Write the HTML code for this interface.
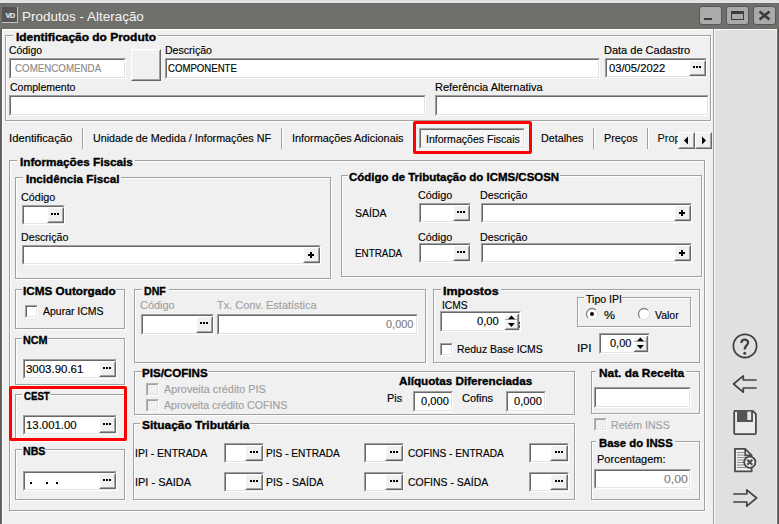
<!DOCTYPE html><html><head><meta charset="utf-8"><style>
html,body{margin:0;padding:0;}
body{width:779px;height:524px;position:relative;overflow:hidden;background:#f0f0f0;font-family:"Liberation Sans", sans-serif;}
.tx{position:absolute;white-space:nowrap;transform-origin:0 0;}
</style></head><body>
<div style="position:absolute;left:0px;top:0px;width:779px;height:3px;background:#e2e2e2"></div>
<div style="position:absolute;left:0px;top:2px;width:779px;height:1px;background:#e8e8e8"></div>
<div style="position:absolute;left:0px;top:3px;width:779px;height:26px;background:#6f706b"></div>
<div style="position:absolute;left:0px;top:3px;width:779px;height:1px;background:#686868"></div>
<div style="position:absolute;left:0px;top:29px;width:2px;height:495px;background:#636363"></div>
<div style="position:absolute;left:777px;top:29px;width:1px;height:495px;background:#6e6e6e"></div>
<div style="position:absolute;left:778px;top:29px;width:1px;height:495px;background:#5a5a5a"></div>
<div style="position:absolute;left:2px;top:29px;width:711px;height:1px;background:#fff"></div>
<div style="position:absolute;left:2px;top:29px;width:1px;height:495px;background:#fff"></div>
<div style="position:absolute;left:713px;top:29px;width:1px;height:495px;background:#a0a0a0"></div>
<div style="position:absolute;left:714px;top:29px;width:1px;height:495px;background:#fff"></div>
<div style="position:absolute;left:715px;top:29px;width:62px;height:495px;background:#e0e0e0"></div>
<div style="position:absolute;left:776px;top:29px;width:1px;height:495px;background:#ebebeb"></div>
<div style="position:absolute;left:715px;top:29px;width:62px;height:1px;background:#fff"></div>
<div style="position:absolute;left:2px;top:7px;width:16px;height:16px;background:#c4c4c4"></div>
<div style="position:absolute;left:2px;top:7px;width:15px;height:15px;background:#555555"></div>
<div style="position:absolute;left:2px;top:9.5px;width:16px;height:11px;color:#e6e6e6;font-size:7.5px;font-weight:bold;line-height:11px;text-align:center;letter-spacing:-0.8px;-webkit-text-stroke:0.2px #e6e6e6">VD</div>
<div class="tx" style="left:21.57px;top:10.00px;font-size:13px;line-height:13px;height:13px;color:#f4f4f4;transform:scaleX(1.0345);">Produtos - Alteração</div>
<div style="position:absolute;left:699px;top:6px;width:23px;height:19px;background:#aaaaaa;border:1px solid #585858;border-radius:3px;box-sizing:border-box"></div>
<div style="position:absolute;left:726px;top:6px;width:23px;height:19px;background:#aaaaaa;border:1px solid #585858;border-radius:3px;box-sizing:border-box"></div>
<div style="position:absolute;left:753px;top:6px;width:23px;height:19px;background:#aaaaaa;border:1px solid #585858;border-radius:3px;box-sizing:border-box"></div>
<div style="position:absolute;left:704px;top:18px;width:8px;height:2px;background:#3c3c3c"></div>
<div style="position:absolute;left:731px;top:11px;width:13px;height:9px;border:1px solid #3c3c3c;border-top-width:3px;box-sizing:border-box"></div>
<svg style="position:absolute;left:758px;top:10px" width="13" height="11"><path d="M1.5 1.5 L11.5 9.5 M11.5 1.5 L1.5 9.5" stroke="#3c3c3c" stroke-width="2.6"/></svg>
<div style="position:absolute;left:6px;top:36px;width:706px;height:86px;border:1px solid #fff;box-sizing:border-box"></div>
<div style="position:absolute;left:5px;top:35px;width:706px;height:86px;border:1px solid #a0a0a0;box-sizing:border-box"></div>
<div style="position:absolute;left:13px;top:34px;width:145px;height:4px;background:#f0f0f0"></div>
<div class="tx" style="left:15.60px;top:31.69px;font-size:11px;line-height:11px;height:11px;color:#000;font-weight:bold;-webkit-text-stroke:0.35px currentColor;transform:scaleX(1.0853);">Identificação do Produto</div>
<div class="tx" style="left:8.60px;top:44.69px;font-size:11px;line-height:11px;height:11px;color:#000;-webkit-text-stroke:0.15px currentColor;transform:scaleX(0.9475);">Código</div>
<div style="position:absolute;left:9px;top:58px;width:117px;height:21px;box-sizing:border-box;border:1px solid;border-color:#a0a0a0 #fff #fff #a0a0a0;"><div style="position:absolute;left:0;top:0;right:0;bottom:0;border:1px solid;border-color:#696969 #e3e3e3 #e3e3e3 #696969;background:#fff"></div></div>
<div class="tx" style="left:14.60px;top:62.69px;font-size:11px;line-height:11px;height:11px;color:#8c8c8c;-webkit-text-stroke:0.15px currentColor;transform:scaleX(0.8867);">COMENCOMENDA</div>
<div style="position:absolute;left:131px;top:49px;width:30px;height:32px;box-sizing:border-box;border:1px solid;border-color:#fff #696969 #696969 #fff;background:#f0f0f0"><div style="position:absolute;left:0;top:0;right:0;bottom:0;border:1px solid;border-color:#f4f4f4 #a0a0a0 #a0a0a0 #f4f4f4;"></div></div>
<div class="tx" style="left:164.66px;top:44.69px;font-size:11px;line-height:11px;height:11px;color:#000;-webkit-text-stroke:0.15px currentColor;transform:scaleX(0.9588);">Descrição</div>
<div style="position:absolute;left:165px;top:58px;width:435px;height:21px;box-sizing:border-box;border:1px solid;border-color:#a0a0a0 #fff #fff #a0a0a0;"><div style="position:absolute;left:0;top:0;right:0;bottom:0;border:1px solid;border-color:#696969 #e3e3e3 #e3e3e3 #696969;background:#fff"></div></div>
<div class="tx" style="left:167.60px;top:62.69px;font-size:11px;line-height:11px;height:11px;color:#000;-webkit-text-stroke:0.15px currentColor;transform:scaleX(0.8740);">COMPONENTE</div>
<div class="tx" style="left:603.60px;top:44.69px;font-size:11px;line-height:11px;height:11px;color:#000;-webkit-text-stroke:0.15px currentColor;transform:scaleX(1.0001);">Data de Cadastro</div>
<div style="position:absolute;left:605px;top:58px;width:102px;height:20px;box-sizing:border-box;border:1px solid;border-color:#a0a0a0 #fff #fff #a0a0a0;"><div style="position:absolute;left:0;top:0;right:0;bottom:0;border:1px solid;border-color:#696969 #e3e3e3 #e3e3e3 #696969;background:#fff"></div></div>
<div style="position:absolute;left:689px;top:60px;width:17px;height:16px;box-sizing:border-box;border:1px solid;border-color:#fff #696969 #696969 #fff;background:#f0f0f0"><div style="position:absolute;left:0;top:0;right:0;bottom:0;border:1px solid;border-color:#f4f4f4 #a0a0a0 #a0a0a0 #f4f4f4;"></div></div>
<div style="position:absolute;left:693px;top:66px;width:2px;height:2px;background:#000"></div>
<div style="position:absolute;left:696px;top:66px;width:2px;height:2px;background:#000"></div>
<div style="position:absolute;left:699px;top:66px;width:2px;height:2px;background:#000"></div>
<div class="tx" style="left:608.60px;top:62.69px;font-size:11px;line-height:11px;height:11px;color:#000;-webkit-text-stroke:0.15px currentColor;transform:scaleX(1.0198);">03/05/2022</div>
<div class="tx" style="left:9.60px;top:81.69px;font-size:11px;line-height:11px;height:11px;color:#000;-webkit-text-stroke:0.15px currentColor;transform:scaleX(0.9561);">Complemento</div>
<div style="position:absolute;left:9px;top:95px;width:417px;height:21px;box-sizing:border-box;border:1px solid;border-color:#a0a0a0 #fff #fff #a0a0a0;"><div style="position:absolute;left:0;top:0;right:0;bottom:0;border:1px solid;border-color:#696969 #e3e3e3 #e3e3e3 #696969;background:#fff"></div></div>
<div class="tx" style="left:434.60px;top:81.69px;font-size:11px;line-height:11px;height:11px;color:#000;-webkit-text-stroke:0.15px currentColor;transform:scaleX(1.0002);">Referência Alternativa</div>
<div style="position:absolute;left:435px;top:95px;width:274px;height:21px;box-sizing:border-box;border:1px solid;border-color:#a0a0a0 #fff #fff #a0a0a0;"><div style="position:absolute;left:0;top:0;right:0;bottom:0;border:1px solid;border-color:#696969 #e3e3e3 #e3e3e3 #696969;background:#fff"></div></div>
<div style="position:absolute;left:82px;top:128px;width:1px;height:21px;background:#a0a0a0"></div>
<div style="position:absolute;left:83px;top:128px;width:1px;height:21px;background:#fff"></div>
<div style="position:absolute;left:281px;top:128px;width:1px;height:21px;background:#a0a0a0"></div>
<div style="position:absolute;left:282px;top:128px;width:1px;height:21px;background:#fff"></div>
<div style="position:absolute;left:593px;top:128px;width:1px;height:21px;background:#a0a0a0"></div>
<div style="position:absolute;left:594px;top:128px;width:1px;height:21px;background:#fff"></div>
<div style="position:absolute;left:647px;top:128px;width:1px;height:21px;background:#a0a0a0"></div>
<div style="position:absolute;left:648px;top:128px;width:1px;height:21px;background:#fff"></div>
<div class="tx" style="left:9.09px;top:132.69px;font-size:11px;line-height:11px;height:11px;color:#000;-webkit-text-stroke:0.15px currentColor;transform:scaleX(1.0251);">Identificação</div>
<div class="tx" style="left:93.43px;top:132.69px;font-size:11px;line-height:11px;height:11px;color:#000;-webkit-text-stroke:0.15px currentColor;transform:scaleX(0.9732);">Unidade de Medida / Informações NF</div>
<div class="tx" style="left:291.82px;top:132.69px;font-size:11px;line-height:11px;height:11px;color:#000;-webkit-text-stroke:0.15px currentColor;transform:scaleX(0.9858);">Informações Adicionais</div>
<div style="position:absolute;left:419px;top:128px;width:106px;height:21px;box-sizing:border-box;border:1px solid;border-color:#a0a0a0 #fff #fff #a0a0a0;"><div style="position:absolute;left:0;top:0;right:0;bottom:0;border:1px solid;border-color:#696969 #e3e3e3 #e3e3e3 #696969;background:#f6f6f6"></div></div>
<div class="tx" style="left:425.64px;top:133.69px;font-size:11px;line-height:11px;height:11px;color:#000;-webkit-text-stroke:0.15px currentColor;transform:scaleX(0.9593);">Informações Fiscais</div>
<div class="tx" style="left:540.62px;top:132.69px;font-size:11px;line-height:11px;height:11px;color:#000;-webkit-text-stroke:0.15px currentColor;transform:scaleX(0.9762);">Detalhes</div>
<div class="tx" style="left:603.53px;top:132.69px;font-size:11px;line-height:11px;height:11px;color:#000;-webkit-text-stroke:0.15px currentColor;transform:scaleX(0.9802);">Preços</div>
<div style="position:absolute;left:657px;top:128px;width:21px;height:21px;overflow:hidden"><div style="position:absolute;left:0.5px;top:4.69px;font-size:11px;line-height:11px;white-space:nowrap">Propriedades</div></div>
<div style="position:absolute;left:678px;top:132px;width:17px;height:17px;box-sizing:border-box;border:1px solid;border-color:#fff #696969 #696969 #fff;background:#f0f0f0"><div style="position:absolute;left:0;top:0;right:0;bottom:0;border:1px solid;border-color:#f4f4f4 #a0a0a0 #a0a0a0 #f4f4f4;"></div></div>
<div style="position:absolute;left:695px;top:132px;width:17px;height:17px;box-sizing:border-box;border:1px solid;border-color:#fff #696969 #696969 #fff;background:#f0f0f0"><div style="position:absolute;left:0;top:0;right:0;bottom:0;border:1px solid;border-color:#f4f4f4 #a0a0a0 #a0a0a0 #f4f4f4;"></div></div>
<svg style="position:absolute;left:678px;top:132px" width="34" height="17"><polygon points="6,8.5 10,4.5 10,12.5" fill="#000"/><polygon points="28,8.5 24,4.5 24,12.5" fill="#000"/></svg>
<div style="position:absolute;left:413px;top:121px;width:119px;height:33px;border:3px solid #ff0000;border-radius:2px;box-sizing:border-box"></div>
<div style="position:absolute;left:10px;top:161px;width:696px;height:351px;border:1px solid #fff;box-sizing:border-box"></div>
<div style="position:absolute;left:9px;top:160px;width:696px;height:351px;border:1px solid #a0a0a0;box-sizing:border-box"></div>
<div style="position:absolute;left:17px;top:159px;width:117.69999999999999px;height:4px;background:#f0f0f0"></div>
<div class="tx" style="left:19.60px;top:156.69px;font-size:11px;line-height:11px;height:11px;color:#000;font-weight:bold;-webkit-text-stroke:0.35px currentColor;transform:scaleX(1.0673);">Informações Fiscais</div>
<div style="position:absolute;left:16px;top:178px;width:316px;height:102px;border:1px solid #fff;box-sizing:border-box"></div>
<div style="position:absolute;left:15px;top:177px;width:316px;height:102px;border:1px solid #a0a0a0;box-sizing:border-box"></div>
<div style="position:absolute;left:23.1px;top:176px;width:98.1px;height:4px;background:#f0f0f0"></div>
<div class="tx" style="left:25.90px;top:173.69px;font-size:11px;line-height:11px;height:11px;color:#000;font-weight:bold;-webkit-text-stroke:0.35px currentColor;transform:scaleX(1.0607);">Incidência Fiscal</div>
<div class="tx" style="left:21.10px;top:191.69px;font-size:11px;line-height:11px;height:11px;color:#000;-webkit-text-stroke:0.15px currentColor;transform:scaleX(0.9853);">Código</div>
<div style="position:absolute;left:22px;top:205px;width:43px;height:20px;box-sizing:border-box;border:1px solid;border-color:#a0a0a0 #fff #fff #a0a0a0;"><div style="position:absolute;left:0;top:0;right:0;bottom:0;border:1px solid;border-color:#696969 #e3e3e3 #e3e3e3 #696969;background:#fff"></div></div>
<div style="position:absolute;left:47px;top:207px;width:17px;height:16px;box-sizing:border-box;border:1px solid;border-color:#fff #696969 #696969 #fff;background:#f0f0f0"><div style="position:absolute;left:0;top:0;right:0;bottom:0;border:1px solid;border-color:#f4f4f4 #a0a0a0 #a0a0a0 #f4f4f4;"></div></div>
<div style="position:absolute;left:51px;top:213px;width:2px;height:2px;background:#000"></div>
<div style="position:absolute;left:54px;top:213px;width:2px;height:2px;background:#000"></div>
<div style="position:absolute;left:57px;top:213px;width:2px;height:2px;background:#000"></div>
<div class="tx" style="left:21.15px;top:231.69px;font-size:11px;line-height:11px;height:11px;color:#000;-webkit-text-stroke:0.15px currentColor;transform:scaleX(0.9697);">Descrição</div>
<div style="position:absolute;left:22px;top:245px;width:299px;height:20px;box-sizing:border-box;border:1px solid;border-color:#a0a0a0 #fff #fff #a0a0a0;"><div style="position:absolute;left:0;top:0;right:0;bottom:0;border:1px solid;border-color:#696969 #e3e3e3 #e3e3e3 #696969;background:#fff"></div></div>
<div style="position:absolute;left:303px;top:247px;width:17px;height:16px;box-sizing:border-box;border:1px solid;border-color:#fff #696969 #696969 #fff;background:#f0f0f0"><div style="position:absolute;left:0;top:0;right:0;bottom:0;border:1px solid;border-color:#f4f4f4 #a0a0a0 #a0a0a0 #f4f4f4;"></div></div>
<div style="position:absolute;left:308px;top:254px;width:6px;height:2px;background:#000"></div>
<div style="position:absolute;left:310px;top:252px;width:2px;height:6px;background:#000"></div>
<div style="position:absolute;left:342px;top:176px;width:361px;height:102px;border:1px solid #fff;box-sizing:border-box"></div>
<div style="position:absolute;left:341px;top:175px;width:361px;height:102px;border:1px solid #a0a0a0;box-sizing:border-box"></div>
<div style="position:absolute;left:348.2px;top:174px;width:211.8px;height:4px;background:#f0f0f0"></div>
<div class="tx" style="left:349.20px;top:171.69px;font-size:11px;line-height:11px;height:11px;color:#000;font-weight:bold;-webkit-text-stroke:0.35px currentColor;transform:scaleX(1.0418);">Código de Tributação do ICMS/CSOSN</div>
<div class="tx" style="left:354.75px;top:207.69px;font-size:11px;line-height:11px;height:11px;color:#000;-webkit-text-stroke:0.15px currentColor;transform:scaleX(0.9547);">SAÍDA</div>
<div class="tx" style="left:418.10px;top:189.69px;font-size:11px;line-height:11px;height:11px;color:#000;-webkit-text-stroke:0.15px currentColor;transform:scaleX(0.9807);">Código</div>
<div style="position:absolute;left:419px;top:203px;width:52px;height:20px;box-sizing:border-box;border:1px solid;border-color:#a0a0a0 #fff #fff #a0a0a0;"><div style="position:absolute;left:0;top:0;right:0;bottom:0;border:1px solid;border-color:#696969 #e3e3e3 #e3e3e3 #696969;background:#fff"></div></div>
<div style="position:absolute;left:453px;top:205px;width:17px;height:16px;box-sizing:border-box;border:1px solid;border-color:#fff #696969 #696969 #fff;background:#f0f0f0"><div style="position:absolute;left:0;top:0;right:0;bottom:0;border:1px solid;border-color:#f4f4f4 #a0a0a0 #a0a0a0 #f4f4f4;"></div></div>
<div style="position:absolute;left:457px;top:211px;width:2px;height:2px;background:#000"></div>
<div style="position:absolute;left:460px;top:211px;width:2px;height:2px;background:#000"></div>
<div style="position:absolute;left:463px;top:211px;width:2px;height:2px;background:#000"></div>
<div class="tx" style="left:479.65px;top:189.69px;font-size:11px;line-height:11px;height:11px;color:#000;-webkit-text-stroke:0.15px currentColor;transform:scaleX(0.9697);">Descrição</div>
<div style="position:absolute;left:481px;top:203px;width:211px;height:20px;box-sizing:border-box;border:1px solid;border-color:#a0a0a0 #fff #fff #a0a0a0;"><div style="position:absolute;left:0;top:0;right:0;bottom:0;border:1px solid;border-color:#696969 #e3e3e3 #e3e3e3 #696969;background:#fff"></div></div>
<div style="position:absolute;left:674px;top:205px;width:17px;height:16px;box-sizing:border-box;border:1px solid;border-color:#fff #696969 #696969 #fff;background:#f0f0f0"><div style="position:absolute;left:0;top:0;right:0;bottom:0;border:1px solid;border-color:#f4f4f4 #a0a0a0 #a0a0a0 #f4f4f4;"></div></div>
<div style="position:absolute;left:679px;top:212px;width:6px;height:2px;background:#000"></div>
<div style="position:absolute;left:681px;top:210px;width:2px;height:6px;background:#000"></div>
<div class="tx" style="left:354.81px;top:247.69px;font-size:11px;line-height:11px;height:11px;color:#000;-webkit-text-stroke:0.15px currentColor;transform:scaleX(0.8965);">ENTRADA</div>
<div class="tx" style="left:418.10px;top:231.69px;font-size:11px;line-height:11px;height:11px;color:#000;-webkit-text-stroke:0.15px currentColor;transform:scaleX(0.9807);">Código</div>
<div style="position:absolute;left:419px;top:243px;width:52px;height:20px;box-sizing:border-box;border:1px solid;border-color:#a0a0a0 #fff #fff #a0a0a0;"><div style="position:absolute;left:0;top:0;right:0;bottom:0;border:1px solid;border-color:#696969 #e3e3e3 #e3e3e3 #696969;background:#fff"></div></div>
<div style="position:absolute;left:453px;top:245px;width:17px;height:16px;box-sizing:border-box;border:1px solid;border-color:#fff #696969 #696969 #fff;background:#f0f0f0"><div style="position:absolute;left:0;top:0;right:0;bottom:0;border:1px solid;border-color:#f4f4f4 #a0a0a0 #a0a0a0 #f4f4f4;"></div></div>
<div style="position:absolute;left:457px;top:251px;width:2px;height:2px;background:#000"></div>
<div style="position:absolute;left:460px;top:251px;width:2px;height:2px;background:#000"></div>
<div style="position:absolute;left:463px;top:251px;width:2px;height:2px;background:#000"></div>
<div class="tx" style="left:479.65px;top:231.69px;font-size:11px;line-height:11px;height:11px;color:#000;-webkit-text-stroke:0.15px currentColor;transform:scaleX(0.9697);">Descrição</div>
<div style="position:absolute;left:481px;top:243px;width:211px;height:20px;box-sizing:border-box;border:1px solid;border-color:#a0a0a0 #fff #fff #a0a0a0;"><div style="position:absolute;left:0;top:0;right:0;bottom:0;border:1px solid;border-color:#696969 #e3e3e3 #e3e3e3 #696969;background:#fff"></div></div>
<div style="position:absolute;left:674px;top:245px;width:17px;height:16px;box-sizing:border-box;border:1px solid;border-color:#fff #696969 #696969 #fff;background:#f0f0f0"><div style="position:absolute;left:0;top:0;right:0;bottom:0;border:1px solid;border-color:#f4f4f4 #a0a0a0 #a0a0a0 #f4f4f4;"></div></div>
<div style="position:absolute;left:679px;top:252px;width:6px;height:2px;background:#000"></div>
<div style="position:absolute;left:681px;top:250px;width:2px;height:6px;background:#000"></div>
<div style="position:absolute;left:16px;top:290px;width:110px;height:40px;border:1px solid #fff;box-sizing:border-box"></div>
<div style="position:absolute;left:15px;top:289px;width:110px;height:40px;border:1px solid #a0a0a0;box-sizing:border-box"></div>
<div style="position:absolute;left:22px;top:288px;width:93.6px;height:4px;background:#f0f0f0"></div>
<div class="tx" style="left:22.60px;top:285.69px;font-size:11px;line-height:11px;height:11px;color:#000;font-weight:bold;-webkit-text-stroke:0.35px currentColor;transform:scaleX(1.0671);">ICMS Outorgado</div>
<div style="position:absolute;left:25px;top:305px;width:13px;height:13px;box-sizing:border-box;border:1px solid;border-color:#a0a0a0 #fff #fff #a0a0a0;"><div style="position:absolute;left:0;top:0;right:0;bottom:0;border:1px solid;border-color:#696969 #e3e3e3 #e3e3e3 #696969;background:#fff"></div></div>
<div class="tx" style="left:43.20px;top:305.69px;font-size:11px;line-height:11px;height:11px;color:#000;-webkit-text-stroke:0.15px currentColor;transform:scaleX(0.9524);">Apurar ICMS</div>
<div style="position:absolute;left:16px;top:339px;width:110px;height:47px;border:1px solid #fff;box-sizing:border-box"></div>
<div style="position:absolute;left:15px;top:338px;width:110px;height:47px;border:1px solid #a0a0a0;box-sizing:border-box"></div>
<div style="position:absolute;left:22px;top:337px;width:25.1px;height:4px;background:#f0f0f0"></div>
<div class="tx" style="left:22.60px;top:334.69px;font-size:11px;line-height:11px;height:11px;color:#000;font-weight:bold;-webkit-text-stroke:0.35px currentColor;transform:scaleX(0.9771);">NCM</div>
<div style="position:absolute;left:23px;top:359px;width:94px;height:20px;box-sizing:border-box;border:1px solid;border-color:#a0a0a0 #fff #fff #a0a0a0;"><div style="position:absolute;left:0;top:0;right:0;bottom:0;border:1px solid;border-color:#696969 #e3e3e3 #e3e3e3 #696969;background:#fff"></div></div>
<div style="position:absolute;left:99px;top:361px;width:17px;height:16px;box-sizing:border-box;border:1px solid;border-color:#fff #696969 #696969 #fff;background:#f0f0f0"><div style="position:absolute;left:0;top:0;right:0;bottom:0;border:1px solid;border-color:#f4f4f4 #a0a0a0 #a0a0a0 #f4f4f4;"></div></div>
<div style="position:absolute;left:103px;top:367px;width:2px;height:2px;background:#000"></div>
<div style="position:absolute;left:106px;top:367px;width:2px;height:2px;background:#000"></div>
<div style="position:absolute;left:109px;top:367px;width:2px;height:2px;background:#000"></div>
<div class="tx" style="left:25.60px;top:363.69px;font-size:11px;line-height:11px;height:11px;color:#000;-webkit-text-stroke:0.15px currentColor;transform:scaleX(1.0410);">3003.90.61</div>
<div style="position:absolute;left:16px;top:395px;width:110px;height:47px;border:1px solid #fff;box-sizing:border-box"></div>
<div style="position:absolute;left:15px;top:394px;width:110px;height:47px;border:1px solid #a0a0a0;box-sizing:border-box"></div>
<div style="position:absolute;left:22.3px;top:393px;width:28.099999999999998px;height:4px;background:#f0f0f0"></div>
<div class="tx" style="left:23.50px;top:390.69px;font-size:11px;line-height:11px;height:11px;color:#000;font-weight:bold;-webkit-text-stroke:0.35px currentColor;transform:scaleX(0.8786);">CEST</div>
<div style="position:absolute;left:23px;top:415px;width:94px;height:20px;box-sizing:border-box;border:1px solid;border-color:#a0a0a0 #fff #fff #a0a0a0;"><div style="position:absolute;left:0;top:0;right:0;bottom:0;border:1px solid;border-color:#696969 #e3e3e3 #e3e3e3 #696969;background:#fff"></div></div>
<div style="position:absolute;left:99px;top:417px;width:17px;height:16px;box-sizing:border-box;border:1px solid;border-color:#fff #696969 #696969 #fff;background:#f0f0f0"><div style="position:absolute;left:0;top:0;right:0;bottom:0;border:1px solid;border-color:#f4f4f4 #a0a0a0 #a0a0a0 #f4f4f4;"></div></div>
<div style="position:absolute;left:103px;top:423px;width:2px;height:2px;background:#000"></div>
<div style="position:absolute;left:106px;top:423px;width:2px;height:2px;background:#000"></div>
<div style="position:absolute;left:109px;top:423px;width:2px;height:2px;background:#000"></div>
<div class="tx" style="left:25.78px;top:419.69px;font-size:11px;line-height:11px;height:11px;color:#000;-webkit-text-stroke:0.15px currentColor;transform:scaleX(1.0359);">13.001.00</div>
<div style="position:absolute;left:16px;top:450px;width:110px;height:51px;border:1px solid #fff;box-sizing:border-box"></div>
<div style="position:absolute;left:15px;top:449px;width:110px;height:51px;border:1px solid #a0a0a0;box-sizing:border-box"></div>
<div style="position:absolute;left:22.3px;top:448px;width:22.7px;height:4px;background:#f0f0f0"></div>
<div class="tx" style="left:22.50px;top:445.69px;font-size:11px;line-height:11px;height:11px;color:#000;font-weight:bold;-webkit-text-stroke:0.35px currentColor;transform:scaleX(0.9665);">NBS</div>
<div style="position:absolute;left:23px;top:471px;width:94px;height:20px;box-sizing:border-box;border:1px solid;border-color:#a0a0a0 #fff #fff #a0a0a0;"><div style="position:absolute;left:0;top:0;right:0;bottom:0;border:1px solid;border-color:#696969 #e3e3e3 #e3e3e3 #696969;background:#fff"></div></div>
<div style="position:absolute;left:99px;top:473px;width:17px;height:16px;box-sizing:border-box;border:1px solid;border-color:#fff #696969 #696969 #fff;background:#f0f0f0"><div style="position:absolute;left:0;top:0;right:0;bottom:0;border:1px solid;border-color:#f4f4f4 #a0a0a0 #a0a0a0 #f4f4f4;"></div></div>
<div style="position:absolute;left:103px;top:479px;width:2px;height:2px;background:#000"></div>
<div style="position:absolute;left:106px;top:479px;width:2px;height:2px;background:#000"></div>
<div style="position:absolute;left:109px;top:479px;width:2px;height:2px;background:#000"></div>
<div style="position:absolute;left:30px;top:482px;width:2px;height:2px;background:#000"></div>
<div style="position:absolute;left:46px;top:482px;width:2px;height:2px;background:#000"></div>
<div style="position:absolute;left:56px;top:482px;width:2px;height:2px;background:#000"></div>
<div style="position:absolute;left:9px;top:386px;width:118px;height:55px;border:3px solid #ff0000;border-radius:2px;box-sizing:border-box"></div>
<div style="position:absolute;left:135px;top:290px;width:292px;height:74px;border:1px solid #fff;box-sizing:border-box"></div>
<div style="position:absolute;left:134px;top:289px;width:292px;height:74px;border:1px solid #a0a0a0;box-sizing:border-box"></div>
<div style="position:absolute;left:142.2px;top:288px;width:27.0px;height:4px;background:#f0f0f0"></div>
<div class="tx" style="left:144.20px;top:285.69px;font-size:11px;line-height:11px;height:11px;color:#000;font-weight:bold;-webkit-text-stroke:0.35px currentColor;transform:scaleX(0.9609);">DNF</div>
<div class="tx" style="left:139.80px;top:299.69px;font-size:11px;line-height:11px;height:11px;color:#a0a0a0;-webkit-text-stroke:0.15px currentColor;transform:scaleX(0.9940);">Código</div>
<div class="tx" style="left:216.70px;top:299.69px;font-size:11px;line-height:11px;height:11px;color:#a0a0a0;-webkit-text-stroke:0.15px currentColor;transform:scaleX(0.9952);">Tx. Conv. Estatística</div>
<div style="position:absolute;left:141px;top:314px;width:73px;height:21px;box-sizing:border-box;border:1px solid;border-color:#a0a0a0 #fff #fff #a0a0a0;"><div style="position:absolute;left:0;top:0;right:0;bottom:0;border:1px solid;border-color:#696969 #e3e3e3 #e3e3e3 #696969;background:#fff"></div></div>
<div style="position:absolute;left:196px;top:316px;width:17px;height:17px;box-sizing:border-box;border:1px solid;border-color:#fff #696969 #696969 #fff;background:#f0f0f0"><div style="position:absolute;left:0;top:0;right:0;bottom:0;border:1px solid;border-color:#f4f4f4 #a0a0a0 #a0a0a0 #f4f4f4;"></div></div>
<div style="position:absolute;left:200px;top:322px;width:2px;height:2px;background:#000"></div>
<div style="position:absolute;left:203px;top:322px;width:2px;height:2px;background:#000"></div>
<div style="position:absolute;left:206px;top:322px;width:2px;height:2px;background:#000"></div>
<div style="position:absolute;left:217px;top:314px;width:201px;height:21px;box-sizing:border-box;border:1px solid;border-color:#a0a0a0 #fff #fff #a0a0a0;"><div style="position:absolute;left:0;top:0;right:0;bottom:0;border:1px solid;border-color:#696969 #e3e3e3 #e3e3e3 #696969;background:#fff"></div></div>
<div class="tx" style="left:385.80px;top:318.69px;font-size:11px;line-height:11px;height:11px;color:#808080;-webkit-text-stroke:0.15px currentColor;transform:scaleX(0.9961);">0,000</div>
<div style="position:absolute;left:434px;top:290px;width:267px;height:74px;border:1px solid #fff;box-sizing:border-box"></div>
<div style="position:absolute;left:433px;top:289px;width:267px;height:74px;border:1px solid #a0a0a0;box-sizing:border-box"></div>
<div style="position:absolute;left:441.2px;top:288px;width:59.900000000000034px;height:4px;background:#f0f0f0"></div>
<div class="tx" style="left:443.20px;top:285.69px;font-size:11px;line-height:11px;height:11px;color:#000;font-weight:bold;-webkit-text-stroke:0.35px currentColor;transform:scaleX(1.1379);">Impostos</div>
<div class="tx" style="left:441.76px;top:299.69px;font-size:11px;line-height:11px;height:11px;color:#000;-webkit-text-stroke:0.15px currentColor;transform:scaleX(0.9331);">ICMS</div>
<div style="position:absolute;left:440px;top:311px;width:81px;height:21px;box-sizing:border-box;border:1px solid;border-color:#a0a0a0 #fff #fff #a0a0a0;"><div style="position:absolute;left:0;top:0;right:0;bottom:0;border:1px solid;border-color:#696969 #e3e3e3 #e3e3e3 #696969;background:#fff"></div></div>
<div class="tx" style="left:477.40px;top:315.69px;font-size:11px;line-height:11px;height:11px;color:#000;-webkit-text-stroke:0.15px currentColor;transform:scaleX(1.0211);">0,00</div>
<div style="position:absolute;left:505px;top:314px;width:14px;height:16px;background:#f0f0f0"></div>
<div style="position:absolute;left:505px;top:314px;width:13px;height:1px;background:#fafafa"></div>
<div style="position:absolute;left:505px;top:314px;width:1px;height:15px;background:#fafafa"></div>
<div style="position:absolute;left:518px;top:314px;width:1px;height:16px;background:#696969"></div>
<div style="position:absolute;left:517px;top:315px;width:1px;height:14px;background:#a0a0a0"></div>
<div style="position:absolute;left:505px;top:329px;width:14px;height:1px;background:#696969"></div>
<div style="position:absolute;left:506px;top:328px;width:12px;height:1px;background:#a0a0a0"></div>
<div style="position:absolute;left:505px;top:319px;width:12px;height:1px;background:#a8a8a8"></div>
<div style="position:absolute;left:505px;top:320px;width:12px;height:1px;background:#fff"></div>
<svg style="position:absolute;left:505px;top:314px" width="14" height="16"><polygon points="2.9000000000000004,5.3 9.9,5.3 6.4,1.6" fill="#000"/><polygon points="2.9000000000000004,9 9.9,9 6.4,12.9" fill="#000"/></svg>
<div style="position:absolute;left:519px;top:322px;width:1px;height:2px;background:#2a2a2a"></div>
<div style="position:absolute;left:519px;top:325px;width:1px;height:3px;background:#3b5fa8"></div>
<div style="position:absolute;left:440px;top:343px;width:13px;height:13px;box-sizing:border-box;border:1px solid;border-color:#a0a0a0 #fff #fff #a0a0a0;"><div style="position:absolute;left:0;top:0;right:0;bottom:0;border:1px solid;border-color:#696969 #e3e3e3 #e3e3e3 #696969;background:#fff"></div></div>
<div class="tx" style="left:456.56px;top:343.69px;font-size:11px;line-height:11px;height:11px;color:#000;-webkit-text-stroke:0.15px currentColor;transform:scaleX(0.9473);">Reduz Base ICMS</div>
<div style="position:absolute;left:578px;top:298px;width:114px;height:30px;border:1px solid #fff;box-sizing:border-box"></div>
<div style="position:absolute;left:577px;top:297px;width:114px;height:30px;border:1px solid #a0a0a0;box-sizing:border-box"></div>
<div style="position:absolute;left:584.4px;top:296px;width:37.5px;height:4px;background:#f0f0f0"></div>
<div class="tx" style="left:585.80px;top:293.69px;font-size:11px;line-height:11px;height:11px;color:#000;-webkit-text-stroke:0.15px currentColor;transform:scaleX(0.9606);">Tipo IPI</div>
<svg style="position:absolute;left:585px;top:307px" width="14" height="14"><circle cx="7" cy="7" r="5.5" fill="#fff"/><path d="M3.1 10.9 A5.5 5.5 0 0 1 10.9 3.1" stroke="#808080" stroke-width="1.3" fill="none"/><path d="M10.9 3.1 A5.5 5.5 0 0 1 3.1 10.9" stroke="#e3e3e3" stroke-width="1.2" fill="none"/><circle cx="7" cy="7" r="2" fill="#000"/></svg>
<div class="tx" style="left:603.80px;top:309.69px;font-size:11px;line-height:11px;height:11px;color:#000;-webkit-text-stroke:0.15px currentColor;transform:scaleX(1.1238);">%</div>
<svg style="position:absolute;left:636.5px;top:307px" width="14" height="14"><circle cx="7" cy="7" r="5.5" fill="#fff"/><path d="M3.1 10.9 A5.5 5.5 0 0 1 10.9 3.1" stroke="#808080" stroke-width="1.3" fill="none"/><path d="M10.9 3.1 A5.5 5.5 0 0 1 3.1 10.9" stroke="#e3e3e3" stroke-width="1.2" fill="none"/></svg>
<div class="tx" style="left:655.00px;top:309.69px;font-size:11px;line-height:11px;height:11px;color:#000;-webkit-text-stroke:0.15px currentColor;transform:scaleX(0.9502);">Valor</div>
<div class="tx" style="left:576.52px;top:342.69px;font-size:11px;line-height:11px;height:11px;color:#000;-webkit-text-stroke:0.15px currentColor;transform:scaleX(1.0833);">IPI</div>
<div style="position:absolute;left:599px;top:333px;width:51px;height:21px;box-sizing:border-box;border:1px solid;border-color:#a0a0a0 #fff #fff #a0a0a0;"><div style="position:absolute;left:0;top:0;right:0;bottom:0;border:1px solid;border-color:#696969 #e3e3e3 #e3e3e3 #696969;background:#fff"></div></div>
<div class="tx" style="left:609.70px;top:337.69px;font-size:11px;line-height:11px;height:11px;color:#000;-webkit-text-stroke:0.15px currentColor;transform:scaleX(1.0006);">0,00</div>
<div style="position:absolute;left:634px;top:336px;width:14px;height:16px;background:#f0f0f0"></div>
<div style="position:absolute;left:634px;top:336px;width:13px;height:1px;background:#fafafa"></div>
<div style="position:absolute;left:634px;top:336px;width:1px;height:15px;background:#fafafa"></div>
<div style="position:absolute;left:647px;top:336px;width:1px;height:16px;background:#696969"></div>
<div style="position:absolute;left:646px;top:337px;width:1px;height:14px;background:#a0a0a0"></div>
<div style="position:absolute;left:634px;top:351px;width:14px;height:1px;background:#696969"></div>
<div style="position:absolute;left:635px;top:350px;width:12px;height:1px;background:#a0a0a0"></div>
<div style="position:absolute;left:634px;top:341px;width:12px;height:1px;background:#a8a8a8"></div>
<div style="position:absolute;left:634px;top:342px;width:12px;height:1px;background:#fff"></div>
<svg style="position:absolute;left:634px;top:336px" width="14" height="16"><polygon points="2.9000000000000004,5.3 9.9,5.3 6.4,1.6" fill="#000"/><polygon points="2.9000000000000004,9 9.9,9 6.4,12.9" fill="#000"/></svg>
<div style="position:absolute;left:135px;top:372px;width:441px;height:44px;border:1px solid #fff;box-sizing:border-box"></div>
<div style="position:absolute;left:134px;top:371px;width:441px;height:44px;border:1px solid #a0a0a0;box-sizing:border-box"></div>
<div style="position:absolute;left:141.6px;top:370px;width:66.4px;height:4px;background:#f0f0f0"></div>
<div class="tx" style="left:142.40px;top:367.69px;font-size:11px;line-height:11px;height:11px;color:#000;font-weight:bold;-webkit-text-stroke:0.35px currentColor;transform:scaleX(1.0523);">PIS/COFINS</div>
<div style="position:absolute;left:146px;top:383px;width:13px;height:13px;box-sizing:border-box;border:1px solid;border-color:#b4b4b4 #fff #fff #b4b4b4;"><div style="position:absolute;left:0;top:0;right:0;bottom:0;border:1px solid;border-color:#a0a0a0 #e3e3e3 #e3e3e3 #a0a0a0;background:#f0f0f0"></div></div>
<div class="tx" style="left:164.00px;top:383.69px;font-size:11px;line-height:11px;height:11px;color:#a0a0a0;-webkit-text-stroke:0.15px currentColor;transform:scaleX(0.9856);">Aproveita crédito PIS</div>
<div style="position:absolute;left:146px;top:399px;width:13px;height:13px;box-sizing:border-box;border:1px solid;border-color:#b4b4b4 #fff #fff #b4b4b4;"><div style="position:absolute;left:0;top:0;right:0;bottom:0;border:1px solid;border-color:#a0a0a0 #e3e3e3 #e3e3e3 #a0a0a0;background:#f0f0f0"></div></div>
<div class="tx" style="left:164.00px;top:399.69px;font-size:11px;line-height:11px;height:11px;color:#a0a0a0;-webkit-text-stroke:0.15px currentColor;transform:scaleX(0.9702);">Aproveita crédito COFINS</div>
<div class="tx" style="left:398.80px;top:375.69px;font-size:11px;line-height:11px;height:11px;color:#000;font-weight:bold;-webkit-text-stroke:0.35px currentColor;transform:scaleX(1.0625);">Alíquotas Diferenciadas</div>
<div class="tx" style="left:387.43px;top:392.69px;font-size:11px;line-height:11px;height:11px;color:#000;-webkit-text-stroke:0.15px currentColor;transform:scaleX(0.9937);">Pis</div>
<div style="position:absolute;left:413px;top:391px;width:40px;height:21px;box-sizing:border-box;border:1px solid;border-color:#a0a0a0 #fff #fff #a0a0a0;"><div style="position:absolute;left:0;top:0;right:0;bottom:0;border:1px solid;border-color:#696969 #e3e3e3 #e3e3e3 #696969;background:#fff"></div></div>
<div class="tx" style="left:420.80px;top:395.69px;font-size:11px;line-height:11px;height:11px;color:#000;-webkit-text-stroke:0.15px currentColor;transform:scaleX(1.0107);">0,000</div>
<div class="tx" style="left:462.00px;top:392.69px;font-size:11px;line-height:11px;height:11px;color:#000;-webkit-text-stroke:0.15px currentColor;transform:scaleX(0.9961);">Cofins</div>
<div style="position:absolute;left:506px;top:391px;width:40px;height:21px;box-sizing:border-box;border:1px solid;border-color:#a0a0a0 #fff #fff #a0a0a0;"><div style="position:absolute;left:0;top:0;right:0;bottom:0;border:1px solid;border-color:#696969 #e3e3e3 #e3e3e3 #696969;background:#fff"></div></div>
<div class="tx" style="left:513.80px;top:395.69px;font-size:11px;line-height:11px;height:11px;color:#000;-webkit-text-stroke:0.15px currentColor;transform:scaleX(1.0107);">0,000</div>
<div style="position:absolute;left:134px;top:424px;width:442px;height:77px;border:1px solid #fff;box-sizing:border-box"></div>
<div style="position:absolute;left:133px;top:423px;width:442px;height:77px;border:1px solid #a0a0a0;box-sizing:border-box"></div>
<div style="position:absolute;left:140px;top:422px;width:109.5px;height:4px;background:#f0f0f0"></div>
<div class="tx" style="left:141.60px;top:419.69px;font-size:11px;line-height:11px;height:11px;color:#000;font-weight:bold;-webkit-text-stroke:0.35px currentColor;transform:scaleX(1.0853);">Situação Tributária</div>
<div class="tx" style="left:134.86px;top:447.69px;font-size:11px;line-height:11px;height:11px;color:#000;-webkit-text-stroke:0.15px currentColor;transform:scaleX(0.9523);">IPI - ENTRADA</div>
<div class="tx" style="left:266.18px;top:447.69px;font-size:11px;line-height:11px;height:11px;color:#000;-webkit-text-stroke:0.15px currentColor;transform:scaleX(0.9218);">PIS - ENTRADA</div>
<div class="tx" style="left:407.80px;top:447.69px;font-size:11px;line-height:11px;height:11px;color:#000;-webkit-text-stroke:0.15px currentColor;transform:scaleX(0.9214);">COFINS - ENTRADA</div>
<div class="tx" style="left:134.81px;top:476.69px;font-size:11px;line-height:11px;height:11px;color:#000;-webkit-text-stroke:0.15px currentColor;transform:scaleX(0.9969);">IPI - SAIDA</div>
<div class="tx" style="left:266.16px;top:476.69px;font-size:11px;line-height:11px;height:11px;color:#000;-webkit-text-stroke:0.15px currentColor;transform:scaleX(0.9487);">PIS - SAÍDA</div>
<div class="tx" style="left:407.80px;top:476.69px;font-size:11px;line-height:11px;height:11px;color:#000;-webkit-text-stroke:0.15px currentColor;transform:scaleX(0.9504);">COFINS - SAÍDA</div>
<div style="position:absolute;left:224px;top:443px;width:40px;height:20px;box-sizing:border-box;border:1px solid;border-color:#a0a0a0 #fff #fff #a0a0a0;"><div style="position:absolute;left:0;top:0;right:0;bottom:0;border:1px solid;border-color:#696969 #e3e3e3 #e3e3e3 #696969;background:#fff"></div></div>
<div style="position:absolute;left:245px;top:445px;width:18px;height:16px;box-sizing:border-box;border:1px solid;border-color:#fff #696969 #696969 #fff;background:#f0f0f0"><div style="position:absolute;left:0;top:0;right:0;bottom:0;border:1px solid;border-color:#f4f4f4 #a0a0a0 #a0a0a0 #f4f4f4;"></div></div>
<div style="position:absolute;left:250px;top:451px;width:2px;height:2px;background:#000"></div>
<div style="position:absolute;left:253px;top:451px;width:2px;height:2px;background:#000"></div>
<div style="position:absolute;left:256px;top:451px;width:2px;height:2px;background:#000"></div>
<div style="position:absolute;left:364px;top:443px;width:40px;height:20px;box-sizing:border-box;border:1px solid;border-color:#a0a0a0 #fff #fff #a0a0a0;"><div style="position:absolute;left:0;top:0;right:0;bottom:0;border:1px solid;border-color:#696969 #e3e3e3 #e3e3e3 #696969;background:#fff"></div></div>
<div style="position:absolute;left:385px;top:445px;width:18px;height:16px;box-sizing:border-box;border:1px solid;border-color:#fff #696969 #696969 #fff;background:#f0f0f0"><div style="position:absolute;left:0;top:0;right:0;bottom:0;border:1px solid;border-color:#f4f4f4 #a0a0a0 #a0a0a0 #f4f4f4;"></div></div>
<div style="position:absolute;left:390px;top:451px;width:2px;height:2px;background:#000"></div>
<div style="position:absolute;left:393px;top:451px;width:2px;height:2px;background:#000"></div>
<div style="position:absolute;left:396px;top:451px;width:2px;height:2px;background:#000"></div>
<div style="position:absolute;left:529px;top:443px;width:40px;height:20px;box-sizing:border-box;border:1px solid;border-color:#a0a0a0 #fff #fff #a0a0a0;"><div style="position:absolute;left:0;top:0;right:0;bottom:0;border:1px solid;border-color:#696969 #e3e3e3 #e3e3e3 #696969;background:#fff"></div></div>
<div style="position:absolute;left:550px;top:445px;width:18px;height:16px;box-sizing:border-box;border:1px solid;border-color:#fff #696969 #696969 #fff;background:#f0f0f0"><div style="position:absolute;left:0;top:0;right:0;bottom:0;border:1px solid;border-color:#f4f4f4 #a0a0a0 #a0a0a0 #f4f4f4;"></div></div>
<div style="position:absolute;left:555px;top:451px;width:2px;height:2px;background:#000"></div>
<div style="position:absolute;left:558px;top:451px;width:2px;height:2px;background:#000"></div>
<div style="position:absolute;left:561px;top:451px;width:2px;height:2px;background:#000"></div>
<div style="position:absolute;left:224px;top:472px;width:40px;height:20px;box-sizing:border-box;border:1px solid;border-color:#a0a0a0 #fff #fff #a0a0a0;"><div style="position:absolute;left:0;top:0;right:0;bottom:0;border:1px solid;border-color:#696969 #e3e3e3 #e3e3e3 #696969;background:#fff"></div></div>
<div style="position:absolute;left:245px;top:474px;width:18px;height:16px;box-sizing:border-box;border:1px solid;border-color:#fff #696969 #696969 #fff;background:#f0f0f0"><div style="position:absolute;left:0;top:0;right:0;bottom:0;border:1px solid;border-color:#f4f4f4 #a0a0a0 #a0a0a0 #f4f4f4;"></div></div>
<div style="position:absolute;left:250px;top:480px;width:2px;height:2px;background:#000"></div>
<div style="position:absolute;left:253px;top:480px;width:2px;height:2px;background:#000"></div>
<div style="position:absolute;left:256px;top:480px;width:2px;height:2px;background:#000"></div>
<div style="position:absolute;left:364px;top:472px;width:40px;height:20px;box-sizing:border-box;border:1px solid;border-color:#a0a0a0 #fff #fff #a0a0a0;"><div style="position:absolute;left:0;top:0;right:0;bottom:0;border:1px solid;border-color:#696969 #e3e3e3 #e3e3e3 #696969;background:#fff"></div></div>
<div style="position:absolute;left:385px;top:474px;width:18px;height:16px;box-sizing:border-box;border:1px solid;border-color:#fff #696969 #696969 #fff;background:#f0f0f0"><div style="position:absolute;left:0;top:0;right:0;bottom:0;border:1px solid;border-color:#f4f4f4 #a0a0a0 #a0a0a0 #f4f4f4;"></div></div>
<div style="position:absolute;left:390px;top:480px;width:2px;height:2px;background:#000"></div>
<div style="position:absolute;left:393px;top:480px;width:2px;height:2px;background:#000"></div>
<div style="position:absolute;left:396px;top:480px;width:2px;height:2px;background:#000"></div>
<div style="position:absolute;left:529px;top:472px;width:40px;height:20px;box-sizing:border-box;border:1px solid;border-color:#a0a0a0 #fff #fff #a0a0a0;"><div style="position:absolute;left:0;top:0;right:0;bottom:0;border:1px solid;border-color:#696969 #e3e3e3 #e3e3e3 #696969;background:#fff"></div></div>
<div style="position:absolute;left:550px;top:474px;width:18px;height:16px;box-sizing:border-box;border:1px solid;border-color:#fff #696969 #696969 #fff;background:#f0f0f0"><div style="position:absolute;left:0;top:0;right:0;bottom:0;border:1px solid;border-color:#f4f4f4 #a0a0a0 #a0a0a0 #f4f4f4;"></div></div>
<div style="position:absolute;left:555px;top:480px;width:2px;height:2px;background:#000"></div>
<div style="position:absolute;left:558px;top:480px;width:2px;height:2px;background:#000"></div>
<div style="position:absolute;left:561px;top:480px;width:2px;height:2px;background:#000"></div>
<div style="position:absolute;left:592px;top:372px;width:109px;height:43px;border:1px solid #fff;box-sizing:border-box"></div>
<div style="position:absolute;left:591px;top:371px;width:109px;height:43px;border:1px solid #a0a0a0;box-sizing:border-box"></div>
<div style="position:absolute;left:596px;top:370px;width:90.39999999999998px;height:4px;background:#f0f0f0"></div>
<div class="tx" style="left:598.60px;top:367.69px;font-size:11px;line-height:11px;height:11px;color:#000;font-weight:bold;-webkit-text-stroke:0.35px currentColor;transform:scaleX(1.0789);">Nat. da Receita</div>
<div style="position:absolute;left:594px;top:387px;width:97px;height:21px;box-sizing:border-box;border:1px solid;border-color:#a0a0a0 #fff #fff #a0a0a0;"><div style="position:absolute;left:0;top:0;right:0;bottom:0;border:1px solid;border-color:#696969 #e3e3e3 #e3e3e3 #696969;background:#fff"></div></div>
<div style="position:absolute;left:594px;top:418px;width:13px;height:13px;box-sizing:border-box;border:1px solid;border-color:#b4b4b4 #fff #fff #b4b4b4;"><div style="position:absolute;left:0;top:0;right:0;bottom:0;border:1px solid;border-color:#a0a0a0 #e3e3e3 #e3e3e3 #a0a0a0;background:#f0f0f0"></div></div>
<div class="tx" style="left:611.15px;top:419.69px;font-size:11px;line-height:11px;height:11px;color:#a0a0a0;-webkit-text-stroke:0.15px currentColor;transform:scaleX(0.9603);">Retém INSS</div>
<div style="position:absolute;left:592px;top:442px;width:109px;height:59px;border:1px solid #fff;box-sizing:border-box"></div>
<div style="position:absolute;left:591px;top:441px;width:109px;height:59px;border:1px solid #a0a0a0;box-sizing:border-box"></div>
<div style="position:absolute;left:596px;top:440px;width:78.70000000000005px;height:4px;background:#f0f0f0"></div>
<div class="tx" style="left:598.60px;top:437.69px;font-size:11px;line-height:11px;height:11px;color:#000;font-weight:bold;-webkit-text-stroke:0.35px currentColor;transform:scaleX(1.0303);">Base do INSS</div>
<div class="tx" style="left:596.80px;top:453.69px;font-size:11px;line-height:11px;height:11px;color:#000;-webkit-text-stroke:0.15px currentColor;transform:scaleX(1.0018);">Porcentagem:</div>
<div style="position:absolute;left:594px;top:469px;width:97px;height:20px;box-sizing:border-box;border:1px solid;border-color:#a0a0a0 #fff #fff #a0a0a0;"><div style="position:absolute;left:0;top:0;right:0;bottom:0;border:1px solid;border-color:#696969 #e3e3e3 #e3e3e3 #696969;background:#fff"></div></div>
<div class="tx" style="left:663.60px;top:473.69px;font-size:11px;line-height:11px;height:11px;color:#808080;-webkit-text-stroke:0.15px currentColor;transform:scaleX(1.1107);">0,00</div>
<svg style="position:absolute;left:715px;top:320px" width="61" height="200">
<g fill="none" stroke="#424242" stroke-width="1.8">
<circle cx="30" cy="25.9" r="11.6"/>
<path d="M26.4 23 C26.4 18.6 33.1 18.6 33.1 22.6 C33.1 25.3 29.7 25.7 29.7 29.4" stroke-width="2.3"/>
<path d="M41.6 60 H28.3 V55.8 L18.5 64 L28.3 72.2 V68 H41.6" stroke-linejoin="round" stroke-width="1.7"/>
</g>
<circle cx="29.7" cy="33.2" r="1.5" fill="#424242"/>
</svg>
<svg style="position:absolute;left:715px;top:400px" width="61" height="124">
<g fill="none" stroke="#4a4a4a" stroke-width="1.8">
<path d="M19.2 10.9 H37.8 L40.9 14 V33 Q40.9 34.1 39.8 34.1 H20.3 Q19.2 34.1 19.2 33 V12 Q19.2 10.9 20.3 10.9 Z" fill="#ececec"/>
</g>
<rect x="22" y="10" width="16" height="12" fill="#555"/>
<rect x="32.3" y="11.6" width="3.8" height="8.4" fill="#e6e6e6"/>
<g fill="none" stroke="#4a4a4a" stroke-width="1.8">
<path d="M20 48.9 H30.2 L36.6 55.3 V71.3 H20 Z" fill="#f0f0f0"/>
<path d="M30.2 48.9 V55.3 H36.6" />
</g>
<g stroke="#8a8a8a" stroke-width="1">
<path d="M22 52.5 H29 M22 55 H29 M22 57.5 H31 M22 60 H31 M22 62.5 H30 M22 65 H30 M22 67.5 H31"/>
</g>
<circle cx="34.8" cy="62.2" r="5.6" fill="#f0f0f0" stroke="#4a4a4a" stroke-width="1.8"/>
<path d="M32.3 59.7 L37.3 64.7 M37.3 59.7 L32.3 64.7" stroke="#4a4a4a" stroke-width="2"/>
<path d="M18.2 94 H31.8 V89.8 L41.6 98 L31.8 106.2 V102 H18.2" fill="none" stroke="#424242" stroke-width="1.7" stroke-linejoin="round"/>
</svg>
</body></html>
